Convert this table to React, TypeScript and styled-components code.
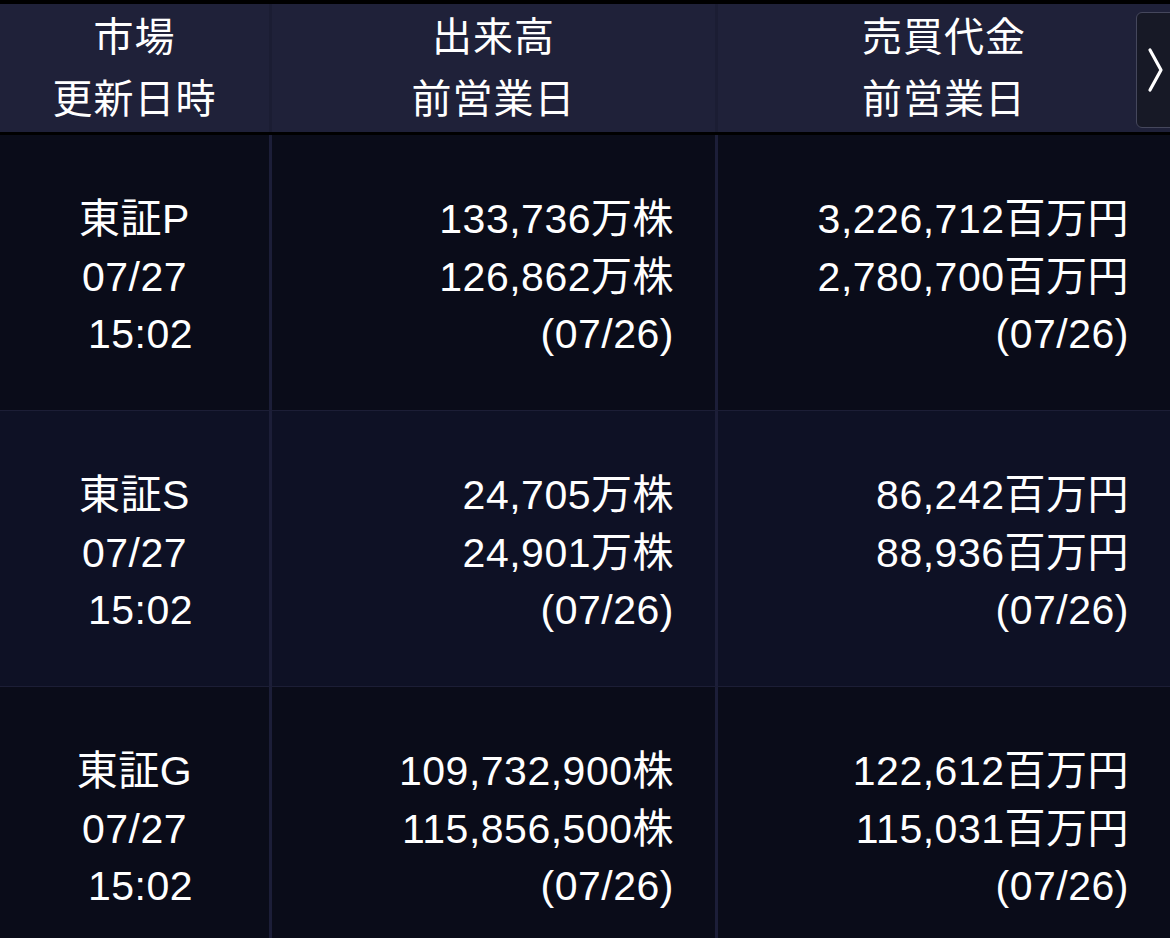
import styled, { createGlobalStyle } from "styled-components";

const GlobalStyle = createGlobalStyle`
  html, body {
    margin: 0;
    padding: 0;
    background: #0a0c19;
  }
  body {
    font-family: "Liberation Sans", "Noto Sans CJK JP", sans-serif;
    color: #ffffff;
  }
`;

const Screen = styled.div`
  width: 1170px;
  height: 938px;
  overflow: hidden;
  position: relative;
  background: #0a0c19;
  border-top: 4px solid #000;
  box-sizing: border-box;
`;

const Grid = styled.div`
  display: grid;
  grid-template-columns: 272px 446px 1fr;
`;

const HeadRow = styled(Grid)`
  height: 128px;
  background: #1f2139;
  border-bottom: 3px solid #000;
`;

const HeadCell = styled.div<{ $last?: boolean }>`
  display: flex;
  flex-direction: column;
  align-items: center;
  justify-content: center;
  font-size: 40px;
  line-height: 62px;
  letter-spacing: 1px;
  border-right: ${(p) => (p.$last ? "none" : "3px solid #1b1d33")};
`;

const BodyRow = styled(Grid)<{ $even?: boolean }>`
  height: 276px;
  background: ${(p) => (p.$even ? "#0e1125" : "#0a0c19")};
  border-bottom: 1px solid #1c1e36;
  box-sizing: border-box;
`;

const Cell = styled.div<{ $align: "center" | "right"; $last?: boolean }>`
  display: flex;
  flex-direction: column;
  justify-content: center;
  align-items: ${(p) => (p.$align === "center" ? "center" : "flex-end")};
  padding: 10px ${(p) => (p.$align === "right" ? "41px" : "0")} 0 0;
  font-size: 41px;
  line-height: 57.5px;
  letter-spacing: 0.5px;
  white-space: pre;
  border-right: ${(p) => (p.$last ? "none" : "3px solid #1c1e38")};
`;

const NextButton = styled.div`
  position: absolute;
  top: 8px;
  left: 1136px;
  width: 48px;
  height: 116px;
  border: 1px solid #45475c;
  border-radius: 6px;
  background: #171926;
  display: flex;
  align-items: center;
  padding-left: 10px;
  box-sizing: border-box;
`;

type Market = {
  name: string;
  date: string;
  time: string;
  volume: string;
  prevVolume: string;
  value: string;
  prevValue: string;
  prevDate: string;
};

const markets: Market[] = [
  {
    name: "東証P",
    date: "07/27",
    time: " 15:02",
    volume: "133,736万株",
    prevVolume: "126,862万株",
    value: "3,226,712百万円",
    prevValue: "2,780,700百万円",
    prevDate: "(07/26)",
  },
  {
    name: "東証S",
    date: "07/27",
    time: " 15:02",
    volume: "24,705万株",
    prevVolume: "24,901万株",
    value: "86,242百万円",
    prevValue: "88,936百万円",
    prevDate: "(07/26)",
  },
  {
    name: "東証G",
    date: "07/27",
    time: " 15:02",
    volume: "109,732,900株",
    prevVolume: "115,856,500株",
    value: "122,612百万円",
    prevValue: "115,031百万円",
    prevDate: "(07/26)",
  },
];

const App = () => {
  return (
    <>
      <GlobalStyle />
      <Screen>
        <HeadRow>
          <HeadCell>
            <span>市場</span>
            <span>更新日時</span>
          </HeadCell>
          <HeadCell>
            <span>出来高</span>
            <span>前営業日</span>
          </HeadCell>
          <HeadCell $last>
            <span>売買代金</span>
            <span>前営業日</span>
          </HeadCell>
        </HeadRow>
        {markets.map((m, i) => (
          <BodyRow key={m.name} $even={i % 2 === 1}>
            <Cell $align="center">
              <span>{m.name}</span>
              <span>{m.date}</span>
              <span>{m.time}</span>
            </Cell>
            <Cell $align="right">
              <span>{m.volume}</span>
              <span>{m.prevVolume}</span>
              <span>{m.prevDate}</span>
            </Cell>
            <Cell $align="right" $last>
              <span>{m.value}</span>
              <span>{m.prevValue}</span>
              <span>{m.prevDate}</span>
            </Cell>
          </BodyRow>
        ))}
        <NextButton>
          <svg width="18" height="46" viewBox="0 0 18 46">
            <path
              d="M3 3 L14 23 L3 43"
              fill="none"
              stroke="#fff"
              strokeWidth={3.2}
              strokeLinecap="round"
              strokeLinejoin="round"
            />
          </svg>
        </NextButton>
      </Screen>
    </>
  );
};

export default App;
